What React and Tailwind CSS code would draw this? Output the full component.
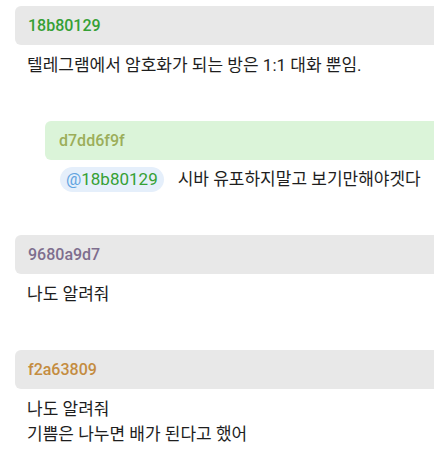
const FONT = { fontFamily: "Roboto, 'Noto Sans CJK KR', sans-serif" };

const messages = [
  {
    id: "18b80129",
    idColor: "text-[#35a035]",
    lines: ["텔레그램에서 암호화가 되는 방은 1:1 대화 뿐임."],
  },
  {
    id: "d7dd6f9f",
    idColor: "text-[#9cae5a]",
    reply: true,
    mention: "18b80129",
    lines: ["시바 유포하지말고 보기만해야겟다"],
  },
  {
    id: "9680a9d7",
    idColor: "text-[#7e6e8e]",
    lines: ["나도 알려줘"],
  },
  {
    id: "f2a63809",
    idColor: "text-[#c48c40]",
    lines: ["나도 알려줘", "기쁨은 나누면 배가 된다고 했어"],
  },
];

function Message({ msg }) {
  if (msg.reply) {
    return (
      <div className="pl-[45px]">
        <div className="flex h-[39px] items-center rounded-l-[6px] bg-[#dbf4d9] pl-[14px]">
          <span className={`text-[16px] font-medium ${msg.idColor}`}>{msg.id}</span>
        </div>
        <div className="mt-[7px] flex items-center pl-[15px]">
          <span className="flex h-[25px] items-center rounded-full bg-[#e5effb] px-[6px] text-[17px]">
            <span className="text-[#62a3e0]">@</span>
            <span className="text-[#35a035]">{msg.mention}</span>
          </span>
          <span className="ml-[14px] text-[17px] leading-[25px] text-[#1e1e1e]">{msg.lines[0]}</span>
        </div>
      </div>
    );
  }

  return (
    <div className="pl-[15px]">
      <div className="flex h-[39px] items-center rounded-l-[6px] bg-[#e8e8e8] pl-[13px]">
        <span className={`text-[16px] font-medium ${msg.idColor}`}>{msg.id}</span>
      </div>
      <div className="mt-[8px] pl-[12px] text-[17px] leading-[25px] text-[#1e1e1e]">
        {msg.lines.map((line) => (
          <p key={line}>{line}</p>
        ))}
      </div>
    </div>
  );
}

export default function App() {
  return (
    <div className="flex h-[461px] w-[434px] flex-col gap-[43px] overflow-hidden bg-white pt-[6px]" style={FONT}>
      {messages.map((msg) => (
        <Message key={msg.id} msg={msg} />
      ))}
    </div>
  );
}
